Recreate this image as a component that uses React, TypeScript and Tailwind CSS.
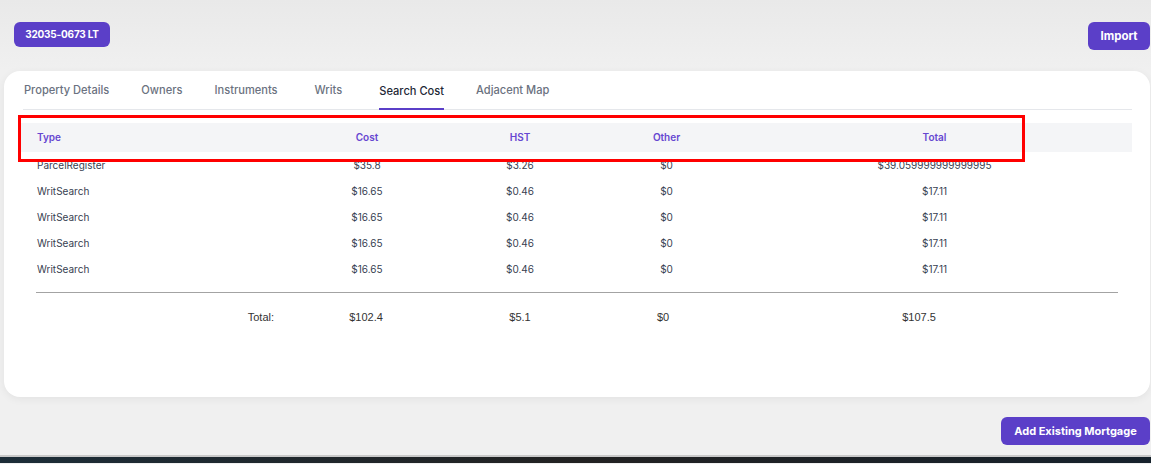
import React from "react";

const rows = [
  { type: "ParcelRegister", cost: "$35.8", hst: "$3.26", other: "$0", total: "$39.059999999999995" },
  { type: "WritSearch", cost: "$16.65", hst: "$0.46", other: "$0", total: "$17.11" },
  { type: "WritSearch", cost: "$16.65", hst: "$0.46", other: "$0", total: "$17.11" },
  { type: "WritSearch", cost: "$16.65", hst: "$0.46", other: "$0", total: "$17.11" },
  { type: "WritSearch", cost: "$16.65", hst: "$0.46", other: "$0", total: "$17.11" },
];

const tabs = ["Property Details", "Owners", "Instruments", "Writs", "Search Cost", "Adjacent Map"];

export default function App() {
  return (
    <div
      className="w-[1151px] h-[464px] overflow-hidden flex flex-col bg-gradient-to-b from-[#e9e9e9] to-[#f0f0f0] to-[70px]"
      style={{ fontFamily: "Inter, 'Noto Sans', sans-serif" }}
    >
      <div className="flex justify-between items-start pt-[22px] pl-[14px] pr-px">
        <div className="h-[25px] w-[96px] rounded-[6px] bg-[#5b3fc8] text-white text-[10px] tracking-[-0.2px] font-bold flex items-center justify-center">
          32035-0673&nbsp;LT
        </div>
        <div className="h-[28px] w-[62px] rounded-[6px] bg-[#5b3fc8] text-white text-[11.5px] font-bold flex items-center justify-center pt-px">
          Import
        </div>
      </div>

      <div className="relative mt-[21px] ml-[4px] mr-px h-[326px] bg-white rounded-[16px] shadow-[0_2px_8px_rgba(0,0,0,0.06)] pl-[17px] pr-[18px]">
        <div className="ml-[2px] pl-px flex gap-[32px] border-b border-[#e5e7eb] h-[39px] items-end">
          {tabs.map((t) => (
            <div
              key={t}
              className={
                t === "Search Cost"
                  ? "ml-[5px] pb-[8px] -mb-px border-b-2 border-[#5b3fc8] text-[11.1px] font-medium text-[#1f2937]"
                  : t === "Writs"
                  ? "ml-[5px] pb-[10px] text-[11.1px] font-medium text-[#6b7280]"
                  : "pb-[10px] text-[11.1px] font-medium text-[#6b7280]"
              }
            >
              {t}
            </div>
          ))}
        </div>

        <div className="mt-[13px]">
          <div className="grid grid-cols-[269px_154px_152px_141px_1fr] h-[29px] items-center bg-[#f4f5f7] text-[10px] font-semibold text-[#6647d1]">
            <div className="pl-[16px]">Type</div>
            <div className="text-center">Cost</div>
            <div className="text-center">HST</div>
            <div className="text-center">Other</div>
            <div className="text-center">Total</div>
          </div>
          {rows.map((r, i) => (
            <div
              key={i}
              className="grid grid-cols-[269px_154px_152px_141px_1fr] h-[26px] items-center text-[10px] text-[#374151]"
            >
              <div className="pl-[16px]">{r.type}</div>
              <div className="text-center">{r.cost}</div>
              <div className="text-center">{r.hst}</div>
              <div className="text-center">{r.other}</div>
              <div className="text-center">{r.total}</div>
            </div>
          ))}
        </div>

        <div className="mt-[10px] ml-[15px] mr-[14px] border-t border-[#a3a3a3]" />

        <div
          className="mt-[11px] h-[26px] flex items-center text-[11px] text-[#333333]"
          style={{ fontFamily: "'Liberation Sans', Arial, sans-serif" }}
        >
          <div className="w-[290px] text-right pr-[37px]">Total:</div>
          <div className="w-[110px] text-center">$102.4</div>
          <div className="w-[198px] text-center">$5.1</div>
          <div className="w-[88px] text-center">$0</div>
          <div className="w-[424px] text-center">$107.5</div>
        </div>

        <div className="absolute left-[14px] top-[44px] w-[1007px] h-[47px] border-[3px] border-[#ff0000] pointer-events-none" />
      </div>

      <div className="flex justify-end mt-[20px] pr-px">
        <div className="h-[28px] w-[149px] rounded-[6px] bg-[#5b3fc8] text-white text-[11px] font-bold flex items-center justify-center">
          Add Existing Mortgage
        </div>
      </div>

      <div className="mt-[10px] h-[2px] bg-[#c9c9c9]" />
      <div className="h-[6px] bg-gradient-to-r from-[#1c2d38] via-[#222222] to-[#16222c]" />
    </div>
  );
}
